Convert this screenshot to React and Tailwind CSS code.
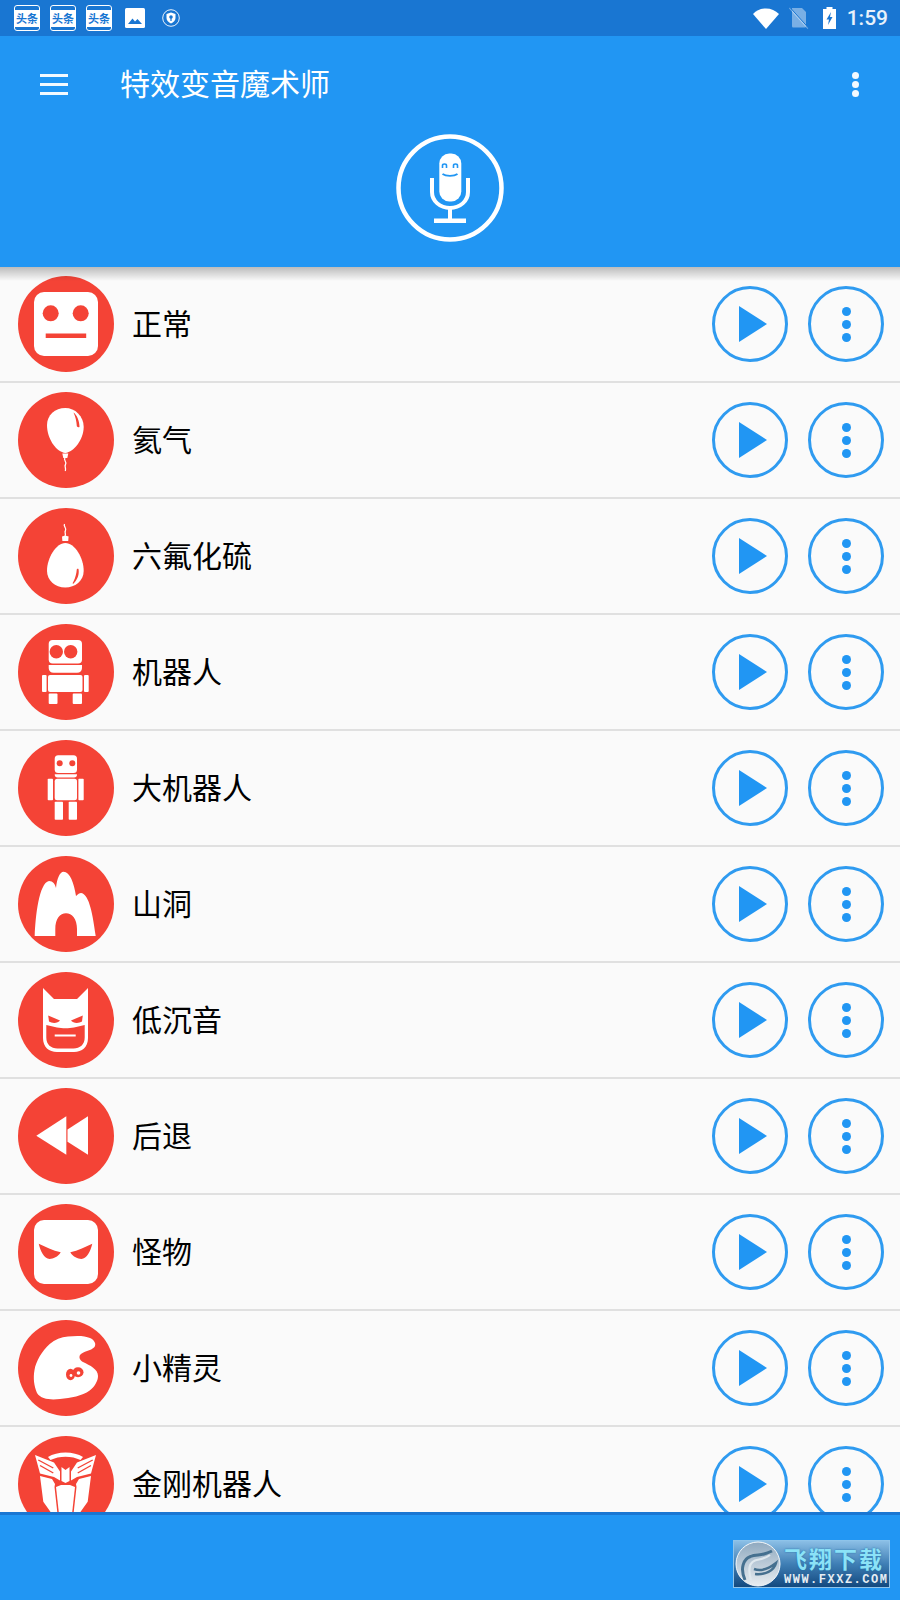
const RED = '#F44336';

function Face() {
  return (
    <>
      <rect x="16" y="16" width="64" height="64" rx="10" fill="#fff" />
      <circle cx="32.7" cy="37.3" r="8" fill={RED} />
      <circle cx="62.7" cy="37.3" r="8" fill={RED} />
      <rect x="27.7" y="57.5" width="40.5" height="4.5" fill={RED} />
    </>
  );
}

function Balloon() {
  return (
    <>
      <path d="M47.3 16C57 16 65.7 24 65.7 35C65.7 47 56 60 47.3 61C38.5 60 29 47 29 33C29 23 37 16 47.3 16Z" fill="#fff" />
      <path d="M55.5 20.5C59 23 61.5 29 61.5 35C60 35.5 59 35 58.8 34C58.5 29 57.5 25 55.5 20.5Z" fill={RED} />
      <path d="M44.3 61.5H50.3L49.3 66H45.3Z" fill="#fff" />
      <path d="M47 66C45 68.5 49.5 70 47.5 72.5C46 74.5 48.5 76 47.3 79" fill="none" stroke="#fff" strokeWidth="1.3" />
    </>
  );
}

function Egg() {
  return (
    <>
      <path d="M47.3 35C57 35 65.7 50 65.7 63C65.7 73 57 79.5 47.3 79.5C37 79.5 29 72 29 63C29 50 38 35 47.3 35Z" fill="#fff" />
      <path d="M60.5 61C61.5 66 59.5 72 55 76C54.5 75.2 54.8 74.5 55.5 73.5C57.5 69.5 58.5 65 58.8 61.2C59.3 60.7 60 60.7 60.5 61Z" fill={RED} />
      <path d="M44 28.5L47.3 27.5L50.6 28.5L50.2 33H44.4Z" fill="#fff" />
      <path d="M46.5 16C45 18.5 49 20 47.5 22.5C46 24.5 48.5 26 47 28" fill="none" stroke="#fff" strokeWidth="1.3" />
    </>
  );
}

function Robot() {
  return (
    <>
      <rect x="30.7" y="16" width="33.3" height="23.5" rx="4" fill="#fff" />
      <circle cx="38.3" cy="27.7" r="6.7" fill={RED} />
      <circle cx="52.7" cy="27.7" r="6.7" fill={RED} />
      <path d="M30.7 41H64V44C64 47 62 48.7 59 48.7H35.7C32.7 48.7 30.7 47 30.7 44Z" fill="#fff" />
      <rect x="30" y="51" width="34.5" height="17" rx="2" fill="#fff" />
      <rect x="24" y="51" width="4.6" height="17" rx="1" fill="#fff" />
      <rect x="66" y="51" width="4.7" height="17" rx="1" fill="#fff" />
      <rect x="30.7" y="69.5" width="8.8" height="10.5" rx="1" fill="#fff" />
      <rect x="54.7" y="69.5" width="9.3" height="10.5" rx="1" fill="#fff" />
    </>
  );
}

function BigRobot() {
  return (
    <>
      <rect x="36.7" y="15.3" width="22.3" height="17.7" rx="3.5" fill="#fff" />
      <circle cx="41.7" cy="23.3" r="3" fill={RED} />
      <circle cx="54.3" cy="23.3" r="3" fill={RED} />
      <path d="M36.7 34.3H59C59 36.5 58 37.5 56 37.5H39.7C37.7 37.5 36.7 36.5 36.7 34.3Z" fill="#fff" />
      <rect x="36.7" y="38.7" width="22.3" height="21.6" rx="2.5" fill="#fff" />
      <rect x="29.7" y="38.7" width="5.3" height="21.6" rx="0.8" fill="#fff" />
      <rect x="60.4" y="38.7" width="5.3" height="21.6" rx="0.8" fill="#fff" />
      <rect x="36.7" y="61.7" width="8.3" height="18" rx="0.8" fill="#fff" />
      <rect x="50.7" y="61.7" width="8.3" height="18" rx="0.8" fill="#fff" />
    </>
  );
}

function Cave() {
  return (
    <path
      d="M16.7 80C17.5 60 21 27 31 25C35 25 37 28 38 32C39 22 42 15.7 45.5 15.7C52 15.7 56 27 58 40C60 38 61.5 37 63 37C70 38 74 52 77.7 80H59V73C59 63 54 57.3 48 57.3C42 57.3 37.3 63 37.3 73V80Z"
      fill="#fff"
    />
  );
}

function Mask() {
  return (
    <>
      <path d="M25 16L36 27H59L70 16V66C70 75 64 80 56 80H39C31 80 25 75 25 66Z" fill="#fff" />
      <path d="M28.3 53L39 55.5C44 56.5 51 56.5 56 55.5L66.7 53V65.5C66.7 72.5 62 76.5 55.5 76.5H39.5C33 76.5 28.3 72.5 28.3 65.5Z" fill={RED} />
      <rect x="36.7" y="62.5" width="21" height="2" fill="#fff" />
      <path d="M30.2 43.5L42 48.5C40 51.5 34 51.5 31 49.5Z" fill={RED} />
      <path d="M64.8 43.5L53 48.5C55 51.5 61 51.5 64 49.5Z" fill={RED} />
    </>
  );
}

function Rewind() {
  return (
    <>
      <polygon points="18.3,47.7 48.3,28.3 48.3,66.7" fill="#fff" />
      <polygon points="49.5,41.5 70,28.3 70,66.7 49.5,53.7" fill="#fff" />
    </>
  );
}

function Monster() {
  return (
    <>
      <rect x="16" y="16" width="64" height="64" rx="10" fill="#fff" />
      <path d="M20.7 39.7C27 42.5 35 46.5 42.7 48.3C40 53 35 55 31.7 55C26 54.5 22.5 47 20.7 39.7Z" fill={RED} />
      <path d="M74.3 39.7C68 42.5 60 46.5 52.3 48.3C55 53 60 55 63.3 55C69 54.5 72.5 47 74.3 39.7Z" fill={RED} />
    </>
  );
}

function Smurf() {
  return (
    <>
      <path
        d="M19 73C16 66 15 58 16.5 50C18 41 24 31 31.7 24C37 19.5 43 17 50 16.5C58 15.5 67 15.5 72 18C76.5 20 78.5 24 76.5 27C73 31 65 31 62 35C60.5 38 62.5 40.5 65 42C72 45.5 80 49 80 56C80 61 76.5 67 71.7 70.5C64 76 53 78 42 79C33 80 23 79.5 19 73Z"
        fill="#fff"
      />
      <ellipse cx="52.5" cy="54.5" rx="4.5" ry="5.8" fill={RED} />
      <ellipse cx="60" cy="52.3" rx="5.5" ry="5" fill={RED} />
      <circle cx="53" cy="55.5" r="1.4" fill="#fff" />
      <circle cx="60.5" cy="53" r="1.8" fill="#fff" />
    </>
  );
}

function Autobot() {
  return (
    <>
      <path d="M30 21C39 15 56 15 65 21L62.5 24C54 19.5 41 19.5 32.5 24Z" fill="#fff" />
      <path d="M17 19L36 26.5L42 35.5V44.5L36 41L22 37.5Z" fill="#fff" />
      <path d="M78 19L59 26.5L53 35.5V44.5L59 41L73 37.5Z" fill="#fff" />
      <path d="M20.3 24L35.3 32M22 29.5L35.3 37" stroke={RED} strokeWidth="1.4" fill="none" />
      <path d="M74.7 24L59.7 32M73 29.5L59.7 37" stroke={RED} strokeWidth="1.4" fill="none" />
      <path d="M43.5 31L47.5 34L51.5 31V45L47.5 47L43.5 45Z" fill="#fff" />
      <path d="M22 40L34 43L37 48L36.5 51L39.5 78H34L25.3 65.7Z" fill="#fff" />
      <path d="M73 40L61 43L58 48L58.5 51L55.5 78H61L69.7 65.7Z" fill="#fff" />
      <path d="M38 51L43 49H52L57 51L54 78H41Z" fill="#fff" />
    </>
  );
}

const effects = [
  { name: '正常', Icon: Face },
  { name: '氦气', Icon: Balloon },
  { name: '六氟化硫', Icon: Egg },
  { name: '机器人', Icon: Robot },
  { name: '大机器人', Icon: BigRobot },
  { name: '山洞', Icon: Cave },
  { name: '低沉音', Icon: Mask },
  { name: '后退', Icon: Rewind },
  { name: '怪物', Icon: Monster },
  { name: '小精灵', Icon: Smurf },
  { name: '金刚机器人', Icon: Autobot },
];

function ToutiaoIcon() {
  return (
    <div className="w-[26px] h-[26px] rounded-[3px] border border-white bg-[#1976D2] flex items-center justify-center">
      <div className="w-full h-[17px] bg-white text-[#1976D2] text-[11px] leading-[17px] font-bold text-center whitespace-nowrap">
        头条
      </div>
    </div>
  );
}

function StatusBar() {
  return (
    <div className="h-9 shrink-0 bg-[#1976D2] flex items-center pl-[14px] pr-[12px]">
      <div className="flex items-center gap-[10px]">
        <ToutiaoIcon />
        <ToutiaoIcon />
        <ToutiaoIcon />
      </div>
      <svg className="ml-[13px]" width="20" height="20" viewBox="0 0 20 20">
        <rect width="20" height="20" rx="1.5" fill="#fff" />
        <path d="M3 16L7.5 10.5L10 13.5L12.5 11L17 16Z" fill="#1976D2" />
      </svg>
      <svg className="ml-[17px]" width="18" height="18" viewBox="0 0 18 18">
        <circle cx="9" cy="9" r="8.3" fill="none" stroke="#fff" strokeWidth="0.9" />
        <path d="M9 3.5L13.5 5V9C13.5 11.5 11.5 13.5 9 14.5C6.5 13.5 4.5 11.5 4.5 9V5Z" fill="#fff" />
        <circle cx="9" cy="8" r="1.8" fill="#1976D2" />
        <rect x="8.4" y="9" width="1.2" height="3" fill="#1976D2" />
      </svg>
      <div className="ml-auto flex items-center">
        <svg width="26" height="21" viewBox="0 0 26 21">
          <path d="M0 6C3.5 2.5 8 0.5 13 0.5C18 0.5 22.5 2.5 26 6L13 21Z" fill="#fff" />
        </svg>
        <svg className="ml-[10px]" width="20" height="22" viewBox="0 0 20 22">
          <path d="M3 1H13L17 5V19C17 20 16.5 20.5 15.5 20.5H4.5C3.5 20.5 3 20 3 19Z" fill="#fff" fillOpacity="0.42" />
          <path d="M0.5 1L19 21.5" stroke="#fff" strokeOpacity="0.4" strokeWidth="1.2" />
          <path d="M1.5 1L20 21.5" stroke="#1976D2" strokeWidth="1" />
        </svg>
        <svg className="ml-[13px]" width="15" height="22" viewBox="0 0 15 22">
          <path d="M4.5 0H10.5V2H14V22H1V2H4.5Z" fill="#fff" />
          <path d="M9 5L4.5 12.5H7L6 18L10.5 10H8Z" fill="#1976D2" />
        </svg>
        <span className="ml-[10px] text-[21px] leading-none font-medium text-white/90 font-['Roboto',sans-serif]">1:59</span>
      </div>
    </div>
  );
}

function MicLogo() {
  return (
    <svg width="108" height="108" viewBox="0 0 108 108">
      <circle cx="54" cy="54" r="51.5" fill="none" stroke="#fff" strokeWidth="4.5" />
      <rect x="43.3" y="19.5" width="22" height="48" rx="10" fill="#fff" />
      <path d="M36 44V58C36 67 44 74 54 74C64 74 72 67 72 58V44" fill="none" stroke="#fff" strokeWidth="4" />
      <rect x="52" y="73" width="4" height="12" fill="#fff" />
      <rect x="38" y="84.5" width="32" height="4.5" fill="#fff" />
      <path d="M46.5 34V31.5C46.5 29.5 50.5 29.5 50.5 31.5V34M57.5 34V31.5C57.5 29.5 61.5 29.5 61.5 31.5V34" fill="none" stroke="#2196F3" strokeWidth="1.6" />
      <path d="M46.5 40C50 42.5 58 42.5 61.5 40" fill="none" stroke="#2196F3" strokeWidth="1.8" />
    </svg>
  );
}

function Header() {
  return (
    <div className="h-[231px] shrink-0 bg-[#2196F3] flex flex-col">
      <div className="h-[98px] flex items-center pl-10 pr-[41px] pb-[2px]">
        <div className="w-7 flex flex-col gap-[6px]">
          <div className="h-[3px] bg-white/95" />
          <div className="h-[3px] bg-white/95" />
          <div className="h-[3px] bg-white/95" />
        </div>
        <span className="ml-[52px] pb-[5px] text-[30px] leading-none text-white whitespace-nowrap">特效变音魔术师</span>
        <div className="ml-auto flex flex-col gap-[2px]">
          <div className="w-[7px] h-[7px] rounded-full bg-white/95" />
          <div className="w-[7px] h-[7px] rounded-full bg-white/95" />
          <div className="w-[7px] h-[7px] rounded-full bg-white/95" />
        </div>
      </div>
      <div className="flex justify-center">
        <MicLogo />
      </div>
    </div>
  );
}

function CircleButton({ children }) {
  return (
    <div className="w-[76px] h-[76px] rounded-full border-[3px] border-[#2f9bf0] flex items-center justify-center">
      {children}
    </div>
  );
}

function EffectRow({ name, Icon }) {
  return (
    <div className="h-[116px] shrink-0 flex items-center pl-[18px] pr-[16px] border-b-2 border-[#e0e0e0]">
      <svg className="shrink-0" width="96" height="96" viewBox="0 0 96 96">
        <circle cx="48" cy="48" r="48" fill={RED} />
        <Icon />
      </svg>
      <span className="ml-[18px] pb-1 text-[30px] leading-none text-black whitespace-nowrap">{name}</span>
      <div className="ml-auto flex items-center gap-5">
        <CircleButton>
          <svg className="ml-[5px]" width="28" height="36" viewBox="0 0 28 36">
            <polygon points="0,0 28,18 0,36" fill="#2196F3" />
          </svg>
        </CircleButton>
        <CircleButton>
          <div className="flex flex-col gap-[4px]">
            <div className="w-[9px] h-[9px] rounded-full bg-[#2196F3]" />
            <div className="w-[9px] h-[9px] rounded-full bg-[#2196F3]" />
            <div className="w-[9px] h-[9px] rounded-full bg-[#2196F3]" />
          </div>
        </CircleButton>
      </div>
    </div>
  );
}

function Watermark() {
  return (
    <div className="w-[157px] h-[48px] border border-[#8fc4ea] bg-gradient-to-b from-[#8bbfe6] via-[#3f7fb5] to-[#12497f] flex items-center pl-[1px]">
      <svg className="shrink-0" width="46" height="46" viewBox="0 0 46 46">
        <defs>
          <linearGradient id="wmDisc" x1="0" y1="0" x2="0" y2="1">
            <stop offset="0" stopColor="#8fa9bf" />
            <stop offset="1" stopColor="#e8edf1" />
          </linearGradient>
        </defs>
        <circle cx="23" cy="23" r="22" fill="url(#wmDisc)" stroke="#f5f8fa" strokeWidth="1" />
        <path d="M10 39C5 28 8 18 15.5 15.5C20 13.5 25 14.5 29 13C32 12 35 11 37 10" fill="none" stroke="#45708f" strokeWidth="3" />
        <path d="M16 39C13 29 14 22 20 19.5C25 18 30 18 35 14" fill="none" stroke="#dfe8ee" strokeWidth="2.2" />
        <path d="M19 28C24 30 32 29 41 22C39 30 30 34 20 33" fill="none" stroke="#45708f" strokeWidth="2.5" />
      </svg>
      <div className="ml-[3px] h-full flex flex-col justify-end items-start">
        <span className="text-[23px] leading-[30px] tracking-[2px] font-bold text-[#8be2f7] whitespace-nowrap [text-shadow:0_0_2px_#1c6ea8]">飞翔下载</span>
        <span className="text-[12px] leading-[14px] tracking-[1.5px] font-bold text-[#e6eef4] whitespace-nowrap font-['Liberation_Mono',monospace]">WWW.FXXZ.COM</span>
      </div>
    </div>
  );
}

export default function App() {
  return (
    <div className="w-[900px] h-[1600px] flex flex-col overflow-hidden bg-[#fafafa] font-['Noto_Sans_CJK_SC','Noto_Sans',sans-serif]">
      <StatusBar />
      <Header />
      <div className="relative flex-1 min-h-0 overflow-hidden flex flex-col">
        <div className="absolute top-0 left-0 right-0 h-[14px] bg-gradient-to-b from-black/25 to-transparent" />
        {effects.map((effect) => (
          <EffectRow key={effect.name} name={effect.name} Icon={effect.Icon} />
        ))}
      </div>
      <div className="h-[88px] shrink-0 bg-[#2196F3] border-t-[3px] border-[#1976D2] flex justify-end pt-[25px] pr-[10px]">
        <Watermark />
      </div>
    </div>
  );
}
